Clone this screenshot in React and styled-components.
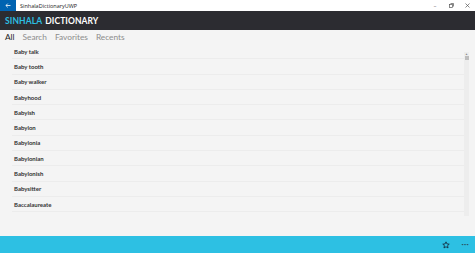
import React from 'react';
import styled, { createGlobalStyle } from 'styled-components';

const GlobalStyle = createGlobalStyle`
    html, body {
        margin: 0;
        padding: 0;
        background: #f4f4f4;
        font-family: Lato, "Open Sans", sans-serif;
    }
`;

const Window = styled.div`
    width: 475px;
    height: 253px;
    display: flex;
    flex-direction: column;
    background: #f4f4f4;
    overflow: hidden;
`;

const TitleBar = styled.div`
    height: 11px;
    display: flex;
    align-items: center;
    background: #ffffff;
`;

const BackButton = styled.div`
    width: 16px;
    height: 11px;
    background: #0063b1;
    display: flex;
    align-items: center;
    justify-content: center;
`;

const WindowTitle = styled.div`
    font-family: "Open Sans", sans-serif;
    font-size: 5.5px;
    color: #222;
    margin-left: 4px;
    flex: 1;
`;

const WindowControl = styled.div`
    width: 16px;
    height: 11px;
    display: flex;
    align-items: center;
    justify-content: center;
    font-size: 6px;
    color: #555;
`;

const Header = styled.div`
    height: 19px;
    background: #2c2c31;
    display: flex;
    align-items: center;
    padding-left: 5px;
    font-weight: 700;
    font-size: 8.5px;
    letter-spacing: 0.1px;
    color: #ffffff;
`;

const Accent = styled.span`
    color: #2dbfe2;
    margin-right: 3px;
`;

const Tabs = styled.div`
    height: 14px;
    display: flex;
    align-items: center;
    gap: 8px;
    padding-left: 5px;
`;

const Tab = styled.div`
    font-size: 8.3px;
    color: ${props => props.active ? '#222' : '#8d8d8d'};
`;

const ListArea = styled.div`
    flex: 1;
    display: flex;
    padding-left: 12px;
    padding-right: 6px;
`;

const List = styled.div`
    flex: 1;
    display: flex;
    flex-direction: column;
`;

const Row = styled.div`
    height: 15.3px;
    box-sizing: border-box;
    display: flex;
    align-items: center;
    padding-left: 2px;
    border-bottom: 1px solid #ececec;
    font-size: 6px;
    font-weight: 700;
    color: #333;
`;

const ScrollTrack = styled.div`
    width: 5px;
    margin-top: 8px;
    height: 164px;
    background: #ededed;
    display: flex;
    flex-direction: column;
    align-items: center;
`;

const ScrollArrow = styled.div`
    font-size: 3px;
    color: #888;
    line-height: 4px;
`;

const ScrollThumb = styled.div`
    width: 4px;
    height: 4px;
    background: #bdbdbd;
`;

const BottomBar = styled.div`
    height: 17px;
    background: #2dc0e3;
    display: flex;
    align-items: center;
    justify-content: flex-end;
    padding-right: 6px;
    gap: 12px;
`;

const Dots = styled.div`
    font-size: 8px;
    font-weight: 700;
    color: #2a5566;
    letter-spacing: 0.3px;
    padding-bottom: 2px;
`;

const words = [
    'Baby talk', 'Baby tooth', 'Baby walker', 'Babyhood', 'Babyish', 'Babylon',
    'Babylonia', 'Babylonian', 'Babylonish', 'Babysitter', 'Baccalaureate'
];

export default function App() {
    return (
        <Window>
            <GlobalStyle />
            <TitleBar>
                <BackButton>
                    <svg width="6" height="5" viewBox="0 0 6 5">
                        <path d="M5.5 2.5H1M2.8 0.6L0.9 2.5L2.8 4.4" stroke="#fff" strokeWidth="0.8" fill="none" />
                    </svg>
                </BackButton>
                <WindowTitle>SinhalaDictionaryUWP</WindowTitle>
                <WindowControl>–</WindowControl>
                <WindowControl>
                    <svg width="5" height="5" viewBox="0 0 5 5">
                        <rect x="0.5" y="1.5" width="3" height="3" stroke="#555" strokeWidth="0.7" fill="none" />
                        <path d="M1.5 0.5H4.5V3.5" stroke="#555" strokeWidth="0.7" fill="none" />
                    </svg>
                </WindowControl>
                <WindowControl>
                    <svg width="5" height="5" viewBox="0 0 5 5">
                        <path d="M0.5 0.5L4.5 4.5M4.5 0.5L0.5 4.5" stroke="#555" strokeWidth="0.7" />
                    </svg>
                </WindowControl>
            </TitleBar>
            <Header>
                <Accent>SINHALA</Accent>DICTIONARY
            </Header>
            <Tabs>
                <Tab active>All</Tab>
                <Tab>Search</Tab>
                <Tab>Favorites</Tab>
                <Tab>Recents</Tab>
            </Tabs>
            <ListArea>
                <List>
                    {words.map(w => <Row key={w}>{w}</Row>)}
                </List>
                <ScrollTrack>
                    <ScrollArrow>▲</ScrollArrow>
                    <ScrollThumb />
                </ScrollTrack>
            </ListArea>
            <BottomBar>
                <svg width="8" height="8" viewBox="0 0 24 24">
                    <path d="M12 2.5l2.9 6.3 6.8.7-5.1 4.6 1.5 6.7L12 17.3l-6.1 3.5 1.5-6.7-5.1-4.6 6.8-.7z" fill="none" stroke="#123" strokeWidth="2.4" strokeLinejoin="round" />
                </svg>
                <Dots>···</Dots>
            </BottomBar>
        </Window>
    );
}
